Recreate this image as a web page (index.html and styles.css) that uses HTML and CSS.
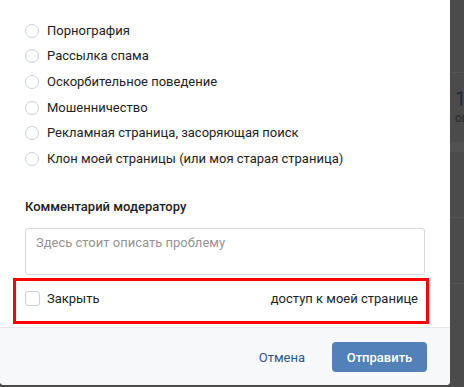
FILE: index.html
```html
<!DOCTYPE html>
<html lang="ru">
<head>
    <meta charset="UTF-8">
    <meta name="viewport" content="width=device-width, initial-scale=1.0">
    <title>Пожаловаться на страницу</title>
    <link rel="stylesheet" href="styles.css">
</head>
<body>

<div class="page">
    <div class="modal">
        <div class="modal-body">
            <p class="lead"><a href="#">Подробнее о правилах сообщества, по которым мы проверяем страницы</a></p>

            <ul class="reasons">
                <li class="reason"><span class="radio"></span>Порнография</li>
                <li class="reason"><span class="radio"></span>Рассылка спама</li>
                <li class="reason"><span class="radio"></span>Оскорбительное поведение</li>
                <li class="reason"><span class="radio"></span>Мошенничество</li>
                <li class="reason"><span class="radio"></span>Рекламная страница, засоряющая поиск</li>
                <li class="reason"><span class="radio"></span>Клон моей страницы (или моя старая страница)</li>
            </ul>

            <h3 class="comment-title">Комментарий модератору</h3>
            <textarea class="comment" placeholder="Здесь стоит описать проблему"></textarea>

            <label class="close-access">
                <span class="checkbox"></span>
                <span class="close-text">Закрыть</span>
                <span class="close-rest">доступ к моей странице</span>
            </label>
        </div>

        <div class="modal-footer">
            <button class="btn-cancel" type="button">Отмена</button>
            <button class="btn-send" type="submit">Отправить</button>
        </div>
    </div>

    <div class="side">
        <div class="side-top"></div>
        <div class="side-stat">
            <span class="side-num">1</span>
            <span class="side-label">ог</span>
        </div>
        <div class="side-band"></div>
        <div class="side-block"></div>
        <div class="side-block"></div>
    </div>
</div>

</body>
</html>
```

FILE: styles.css
```css
body {
    margin: 0;
    background: #4b4b4b;
    font-family: Roboto, "Liberation Sans", Arial, sans-serif;
    font-size: 13px;
    color: #222;
    overflow: hidden;
}
.page {
    display: flex;
    height: 387px;
}
.modal {
    width: 450px;
    height: 385px;
    background: white;
    border-radius: 0 0 4px 4px;
    overflow: hidden;
    display: flex;
    flex-direction: column;
    flex-shrink: 0;
}
.modal-body {
    padding: 0 25px;
    flex: 1;
}
.lead {
    margin: -15px 0 0;
    line-height: 16px;
    white-space: nowrap;
    overflow: hidden;
}
.lead a {
    color: #2a5885;
    text-decoration: none;
}
.reasons {
    list-style: none;
    margin: 0;
    padding: 17px 0 0;
}
.reason {
    height: 25.6px;
    display: flex;
    align-items: center;
    gap: 8px;
    line-height: 16px;
}
.radio {
    width: 14px;
    height: 14px;
    box-sizing: border-box;
    border: 1px solid #c8d0d9;
    border-radius: 50%;
    background: white;
}
.comment-title {
    margin: 27px 0 13px;
    font-size: 13px;
    font-weight: 500;
    line-height: 16px;
    color: #222;
}
.comment {
    display: block;
    width: 100%;
    height: 47px;
    box-sizing: border-box;
    margin: 0;
    padding: 6px 10px;
    border: 1px solid #d3d9de;
    border-radius: 3px;
    font-family: inherit;
    font-size: 13px;
    line-height: 16px;
    resize: none;
    outline: none;
}
.comment::placeholder {
    color: #939393;
}
.close-access {
    display: flex;
    width: 416px;
    height: 46px;
    box-sizing: border-box;
    margin: 3px 0 3px -12px;
    padding: 10px 8px 15px 9px;
    border: 3px solid #ff0000;
    align-items: flex-start;
    line-height: 15px;
}
.checkbox {
    width: 15px;
    height: 15px;
    box-sizing: border-box;
    border: 1px solid #c5d0db;
    border-radius: 3px;
    margin-right: 7px;
}
.close-rest {
    margin-left: auto;
}
.modal-footer {
    height: 58px;
    box-sizing: border-box;
    border-top: 1px solid #e7e8ec;
    background: #f7f8fa;
    display: flex;
    justify-content: flex-end;
    align-items: flex-start;
    padding: 14px 23px 0 0;
}
.btn-cancel {
    background: none;
    border: none;
    padding: 0;
    margin-right: 27px;
    height: 30px;
    font-family: inherit;
    font-size: 13px;
    color: #2a5885;
    cursor: pointer;
}
.btn-send {
    width: 95px;
    height: 30px;
    background: #5181b8;
    color: white;
    border: none;
    border-radius: 4px;
    font-family: inherit;
    font-size: 13px;
    font-weight: 500;
    cursor: pointer;
}
.side {
    flex: 1;
    display: flex;
    flex-direction: column;
    overflow: hidden;
}
.side-top {
    height: 72px;
    border-bottom: 1px solid #555;
}
.side-stat {
    height: 69px;
    display: flex;
    flex-direction: column;
    padding: 16px 0 0 5px;
    box-sizing: border-box;
    line-height: 1;
}
.side-num {
    font-size: 20px;
    color: #1f2b38;
}
.side-label {
    font-size: 12px;
    color: #2c2c2c;
    margin-top: 3px;
}
.side-band {
    height: 10px;
    background: #525252;
}
.side-block {
    height: 65px;
    border-bottom: 1px solid #545454;
}
```
